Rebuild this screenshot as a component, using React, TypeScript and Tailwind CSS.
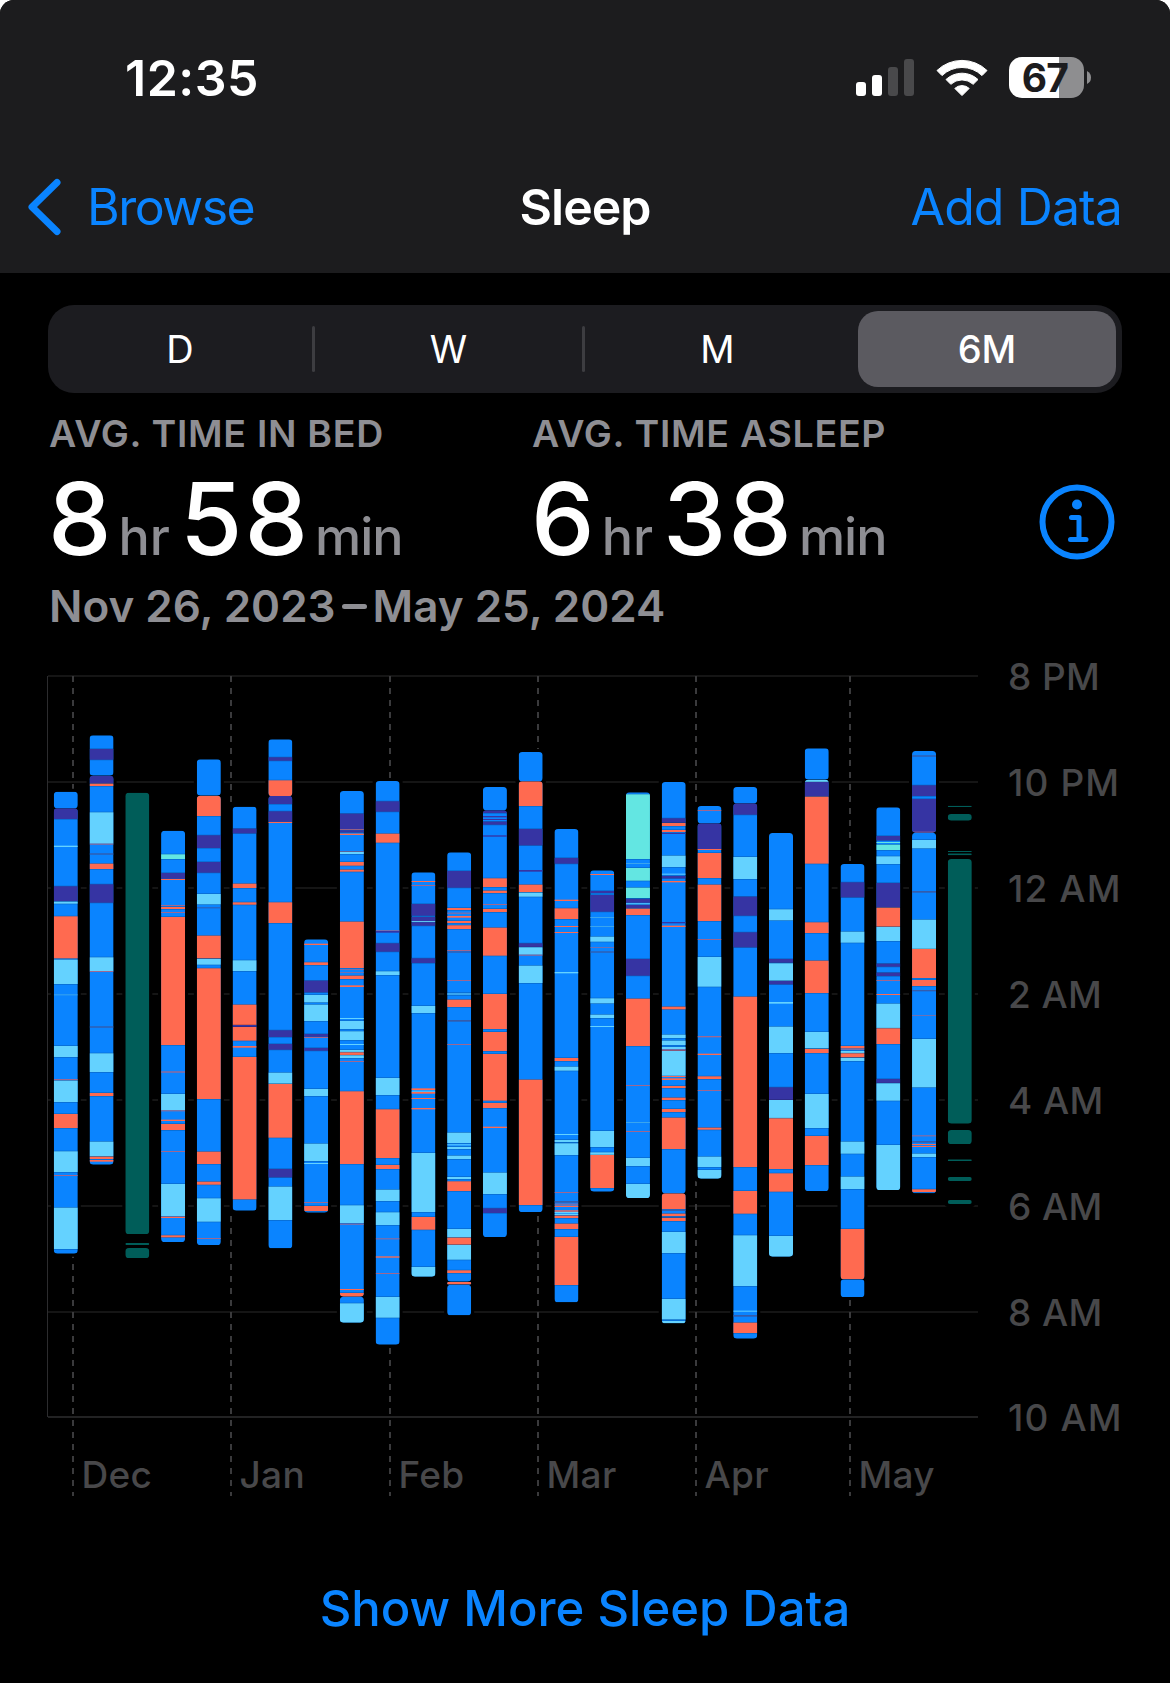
import React from 'react';

type Seg = [kind: string, from: number, to: number];
type Bar = { kind?: 'asleep'; blocks: [number, number][]; segs: Seg[] };

// R awake, P deep, C REM, M unspecified; lowercase kinds are short, blended samples.
const COLORS: Record<string, string> = {
  R: '#ff6a50',
  P: '#3634a3',
  C: '#64d2ff',
  M: '#63e6e2',
  r: '#a0678f',
  p: '#2a56a8',
  d: '#345cab',
  c: '#3aa5ee',
};

const parse = (s: string): Seg[] =>
  s
    .split(' ')
    .filter(Boolean)
    .map((t) => {
      const [a, b] = t.slice(1).split('-').map(Number);
      return [t[0], a, b];
    });

const bar = (blocks: [number, number][], segs: string): Bar => ({ blocks, segs: parse(segs) });
const asleep = (blocks: [number, number][]): Bar => ({ kind: 'asleep', blocks, segs: [] });

// One entry per week; values are thirds of a pixel below y = 660.
const BARS: Bar[] = [
  bar([[395, 445], [445, 1781]], 'P445-477 C557-561 P679-723 C725-731 R769-895 C899-972 c1003-1006 C1158-1191 r1257-1261 C1262-1326 R1362-1404 C1474-1536 r1545-1548 C1643-1767'),
  bar([[226, 347], [347, 1514]], 'P267-299 P347-370 R371-378 C457-551 r551-554 d580-584 R611-627 P673-728 C892-933 r933-936 d1099-1103 C1180-1236 R1299-1308 C1445-1489 R1490-1497 R1500-1505'),
  asleep([[398, 1722], [1749, 1755], [1764, 1794]]),
  bar([[512, 1746]], 'M583-597 P639-656 R657-660 r735-738 R741-747 r756-759 R771-1155 r1234-1238 C1302-1351 r1351-1354 R1379-1383 R1392-1410 r1473-1476 C1572-1668 R1670-1674 R1726-1732'),
  bar([[298, 407], [407, 1755]], 'R407-468 P526-564 P606-638 C702-733 d742-745 R827-895 C897-914 R925-1317 R1475-1512 R1565-1574 C1615-1685 r1734-1737'),
  bar([[440, 1652]], 'P506-520 R671-684 R727-734 C901-933 R1034-1095 P1095-1101 R1101-1142 R1158-1163 R1191-1618'),
  bar([[238, 408], [408, 1765]], 'P292-302 R361-408 P408-432 P454-485 R486-489 R727-789 P1111-1131 P1152-1169 C1238-1271 R1272-1433 P1527-1552 C1580-1680'),
  bar([[838, 1658]], 'R851-855 R907-915 P962-997 C1005-1027 C1034-1083 P1122-1130 r1131-1134 P1164-1172 C1287-1308 C1451-1503 C1509-1512 r1626-1629 R1638-1653'),
  bar([[393, 1910], [1910, 1988]], 'P461-507 r507-510 P511-517 R521-525 r573-575 C576-582 R606-617 R629-635 R785-924 r928-930 r936-938 R947-957 R976-981 C1074-1077 C1083-1107 C1114-1140 C1152-1155 C1170-1176 R1177-1185 C1186-1194 r1203-1206 R1294-1512 C1636-1689 r1691-1694 R1887-1890 R1899-1910 C1930-1988'),
  bar([[363, 2054]], 'P424-455 R521-548 r810-812 P813-818 P850-875 C934-945 C1254-1305 R1348-1494 R1515-1527 C1589-1623 C1657-1695 r1735-1738 R1789-1793 r1839-1842 C1911-1973'),
  bar([[637, 1850]], 'R663-666 r675-678 P732-767 P771-783 C783-786 P787-797 P895-909 C1038-1059 R1285-1290 C1292-1295 R1296-1301 R1314-1317 R1344-1348 C1479-1656 R1671-1709 C1821-1850'),
  bar([[577, 1865], [1865, 1874], [1874, 1966]], 'P633-683 R744-750 r758-761 R768-773 R783-789 R796-807 r870-873 d874-878 r960-963 c999-1005 R1019-1041 d1080-1085 r1152-1155 C1418-1449 C1453-1456 C1461-1467 C1487-1497 C1551-1557 R1564-1593 C1707-1732 R1733-1754 C1755-1799 R1831-1839 R1866-1873'),
  bar([[381, 451], [451, 1731]], 'P451-459 P468-472 P477-480 P485-494 P526-530 R655-681 R692-699 r732-735 R747-756 R803-887 R1002-1107 R1116-1173 R1182-1322 R1329-1344 R1400-1404 C1538-1602 P1645-1659'),
  bar([[276, 364], [364, 1656]], 'R364-438 P507-556 P630-635 R674-696 C698-710 P850-861 C862-884 r884-887 C917-969 R1259-1635'),
  bar([[507, 1927]], 'P594-611 R719-723 R745-777 R798-801 R816-819 C936-940 R1194-1203 C1220-1232 C1422-1425 C1440-1446 C1450-1485 r1596-1599 d1623-1628 r1631-1634 R1637-1641 R1651-1655 C1656-1660 C1662-1665 R1667-1674 R1691-1707 R1731-1875'),
  bar([[631, 1595]], 'R642-645 P693-699 P705-755 c771-774 c798-801 C830-845 r861-863 d874-878 C1015-1030 C1064-1074 C1098-1101 C1413-1461 C1477-1485 R1485-1584'),
  bar([[397, 1614]], 'M403-597 c609-612 M624-662 M683-714 P717-728 C730-733 P735-744 R746-765 P897-947 R1016-1158 r1275-1278 c1386-1389 r1413-1416 C1494-1518 C1572-1614'),
  bar([[366, 1600], [1600, 1990]], 'P475-488 R489-498 R510-516 P519-522 C587-621 C641-644 P648-655 R663-667 P786-790 R797-801 R1040-1048 C1124-1134 C1142-1155 C1161-1167 r1168-1173 C1173-1247 R1248-1251 R1255-1260 R1278-1284 R1313-1320 R1347-1356 R1373-1467 R1600-1647 d1648-1653 R1661-1668 d1669-1673 R1674-1683 C1716-1779 C1917-1978 C1983-1990'),
  bar([[438, 490], [490, 1556]], 'r450-453 P490-567 R567-570 R579-654 R674-783 r837-840 C891-980 r1128-1132 R1181-1185 R1249-1257 r1290-1293 R1403-1409 C1490-1521 C1530-1556'),
  bar([[381, 430], [430, 2036]], 'P430-464 C591-657 P710-767 P817-862 R1010-1521 R1593-1661 C1726-1878 C1952-1955 d1965-1970 R1988-2019'),
  bar([[519, 1790]], 'C748-781 P897-908 C910-962 P963-973 C1026-1031 C1100-1179 P1282-1320 C1320-1374 R1375-1527 R1540-1595 C1728-1790'),
  bar([[265, 359], [359, 1593]], 'C359-366 P366-409 R410-611 R787-819 R902-999 C1116-1165 R1167-1179 C1302-1404 R1428-1515'),
  bar([[612, 1858], [1858, 1911]], 'P667-712 C815-848 R1158-1165 r1166-1169 C1173-1179 R1180-1192 C1194-1203 C1445-1481 C1550-1587 R1707-1858'),
  bar([[442, 1590]], 'P528-541 M546-549 M554-570 C589-612 P669-742 R743-800 C801-843 P911-920 P938-948 r960-963 R1002-1005 C1031-1104 R1105-1152 P1257-1269 C1270-1322 C1455-1590'),
  bar([[273, 518], [518, 1600]], 'd286-290 P376-408 P417-518 r515-518 C540-565 d693-698 C779-867 R867-954 R960-978 d990-994 r1066-1068 C1137-1282 r1426-1429 d1443-1448 R1452-1455 R1458-1461 C1481-1491 R1588-1596'),
  asleep([[437, 441], [462, 482], [573, 576], [580, 586], [597, 1391], [1410, 1452], [1498, 1503], [1551, 1563], [1620, 1632]]),
];

const FIRST_X = 53.8;
const PITCH = 35.76;
const BAR_W = 24;
const toY = (u: number) => 660 + u / 3;

const HOURS = [
  { y: 676, label: '8 PM' },
  { y: 782, label: '10 PM' },
  { y: 888, label: '12 AM' },
  { y: 994, label: '2 AM' },
  { y: 1100, label: '4 AM' },
  { y: 1206, label: '6 AM' },
  { y: 1312, label: '8 AM' },
  { y: 1417, label: '10 AM' },
];

const MONTHS = [
  { x: 73, label: 'Dec' },
  { x: 231, label: 'Jan' },
  { x: 390, label: 'Feb' },
  { x: 538, label: 'Mar' },
  { x: 696, label: 'Apr' },
  { x: 850, label: 'May' },
];

function WeekBar({ data, index }: { data: Bar; index: number }) {
  const x = FIRST_X + index * PITCH;
  const fill = data.kind === 'asleep' ? '#005d59' : '#0a84ff';
  return (
    <g>
      {data.blocks.map(([a, b], i) => (
        <rect key={i} x={x - 3} y={toY(a) - 3} width={BAR_W + 6} height={(b - a) / 3 + 6} rx={3} fill="#000" />
      ))}
      {data.blocks.map(([a, b], i) => {
        const id = `week-${index}-${i}`;
        const h = (b - a) / 3;
        return (
          <g key={i}>
            <clipPath id={id}>
              <rect x={x} y={toY(a)} width={BAR_W} height={h} rx={Math.min(3.6, h / 2)} />
            </clipPath>
            <g clipPath={`url(#${id})`}>
              <rect x={x} y={toY(a)} width={BAR_W} height={h} fill={fill} />
              {data.segs
                .filter(([, s, e]) => e > a && s < b)
                .map(([k, s, e], j) => (
                  <g key={j}>
                    {e - s > 5 && (
                      <rect x={x} y={toY(s) - 0.6} width={BAR_W} height={(e - s) / 3 + 1.2} fill="#000" opacity={0.25} />
                    )}
                    <rect x={x} y={toY(s)} width={BAR_W} height={(e - s) / 3} fill={COLORS[k]} />
                  </g>
                ))}
            </g>
          </g>
        );
      })}
    </g>
  );
}

function SleepChart() {
  return (
    <svg viewBox="0 650 1170 860" width={1170} height={860} className="block font-['Inter',sans-serif]">
      {HOURS.map((h) => (
        <rect key={h.label} x={48} y={h.y - 1} width={930} height={2} fill={h.y === 1417 ? '#222223' : '#151515'} />
      ))}
      <rect x={47} y={676} width={1} height={741} fill="#2c2c2e" />
      {MONTHS.map((m) => (
        <line key={m.x} x1={m.x} x2={m.x} y1={676} y2={1496} stroke="#3a3a3c" strokeWidth={2} strokeDasharray="6 6" />
      ))}
      {BARS.map((b, i) => (
        <WeekBar key={i} data={b} index={i} />
      ))}
      {HOURS.map((h) => (
        <text
          key={h.label}
          x={1008}
          y={h.y + 13.5}
          fontSize={37}
          letterSpacing={h.label.length > 4 ? 1.1 : 0.4}
          fontWeight={450}
          fill="#48484a"
        >
          {h.label}
        </text>
      ))}
      {MONTHS.map((m) => (
        <text key={m.x} x={m.x + 8.5} y={1488} fontSize={37} letterSpacing={0.3} fontWeight={450} fill="#48484a">
          {m.label}
        </text>
      ))}
    </svg>
  );
}

function Signal() {
  return (
    <svg width={58} height={37} viewBox="856 59 58 37">
      <rect x={856} y={82} width={10} height={14} rx={3} fill="#fff" />
      <rect x={872} y={75} width={10} height={21} rx={3} fill="#fff" />
      <rect x={888} y={67} width={10} height={29} rx={3} fill="#49494b" />
      <rect x={904} y={59} width={10} height={37} rx={3} fill="#49494b" />
    </svg>
  );
}

function Wifi() {
  return (
    <svg width={52} height={38} viewBox="-26 -37 52 38" fill="#fff" stroke="#fff" strokeWidth={1} strokeLinejoin="round">
      <path d="M-25-25.5A36 36 0 0 1 25-25.5L20-20.4A28.7 28.7 0 0 0-20-20.4Z" />
      <path d="M-16-16.5A23.4 23.4 0 0 1 16-16.5L11.2-11.7A16.5 16.5 0 0 0-11.2-11.7Z" />
      <path d="M-7.2-7.6A10.6 10.6 0 0 1 7.2-7.6L0-.4Z" />
    </svg>
  );
}

function Battery() {
  return (
    <div className="flex items-center">
      <div className="flex h-[41px] w-[75px] items-center justify-center rounded-[13px] bg-[linear-gradient(90deg,#fff_50px,#8e8e90_50px)] pr-[3px] text-[39px] leading-none font-bold tracking-[-0.8px] text-[#1c1c1e]">
        67
      </div>
      <svg className="ml-[3px]" width={4} height={13} viewBox="0 0 4 13">
        <path d="M0 0Q4 2 4 6.5T0 13Z" fill="#8e8e90" />
      </svg>
    </div>
  );
}

function InfoIcon() {
  return (
    <svg width={76} height={76} viewBox="-38 -38 76 76" fill="none" stroke="#0a84ff">
      <circle r={34.5} strokeWidth={6} />
      <circle cx={0} cy={-17.5} r={5} fill="#0a84ff" stroke="none" />
      <path d="M-5.5-4.5H2V17M-6.5 17.5H9" strokeWidth={5} strokeLinecap="round" strokeLinejoin="round" />
    </svg>
  );
}

function Stat({ title, hours, minutes, className }: { title: string; hours: string; minutes: string; className: string }) {
  return (
    <div className={className}>
      <div className="h-[44px] text-[37.5px] leading-[46px] font-semibold tracking-[0.7px] whitespace-nowrap text-[#8e8e93]">{title}</div>
      <div className="mt-[13px] -ml-px flex h-[100px] items-baseline leading-[100px] whitespace-nowrap text-[#8e8e93]">
        <span className="text-[101px] font-medium tracking-[2px] text-white">{hours}</span>
        <span className="ml-[5px] text-[52px] font-medium">hr</span>
        <span className="ml-[10px] text-[101px] font-medium tracking-[2px] text-white">{minutes}</span>
        <span className="ml-[5px] text-[52px] font-medium tracking-[-1px]">min</span>
      </div>
    </div>
  );
}

export default function App() {
  return (
    <div className="h-[1683px] w-[1170px] overflow-hidden bg-white font-['Inter',sans-serif]">
      <div className="flex h-full flex-col rounded-t-[14px] bg-black">
        <header className="h-[273px] shrink-0 rounded-t-[14px] bg-[#1c1c1e]">
          <div className="flex h-[156px] items-center justify-between pr-[79px] pl-[125px]">
            <span className="text-[50px] leading-none font-semibold tracking-[0.5px] text-white">12:35</span>
            <div className="-mt-px flex items-center">
              <Signal />
              <div className="ml-[22px]">
                <Wifi />
              </div>
              <div className="ml-[21px]">
                <Battery />
              </div>
            </div>
          </div>
          <nav className="grid h-[102px] grid-cols-3 items-center text-[50px] leading-none whitespace-nowrap text-[#0a84ff]">
            <div className="flex items-center pl-[27px]">
              <svg width={34} height={58} viewBox="0 0 34 58" fill="none" stroke="#0a84ff" strokeWidth={7} strokeLinecap="round" strokeLinejoin="round">
                <path d="M30 4.500L5 29L30 53.500" />
              </svg>
              <span className="ml-[26px] tracking-[-1.5px]">Browse</span>
            </div>
            <div className="text-center font-semibold tracking-[-1px] text-white">Sleep</div>
            <div className="pr-[48px] text-right tracking-[-0.9px]">Add Data</div>
          </nav>
        </header>

        <div className="mx-[48px] mt-[32px] flex h-[88px] shrink-0 items-center rounded-[26px] bg-[#1c1c20] pr-[6px] text-[38px] text-white">
          <div className="w-[264px] text-center">D</div>
          <div className="h-[46px] w-[3px] rounded bg-[#3d3d41]" />
          <div className="w-[267px] text-center">W</div>
          <div className="h-[46px] w-[3px] rounded bg-[#3d3d41]" />
          <div className="w-[265px] text-center">M</div>
          <div className="ml-auto flex h-[76px] w-[258px] items-center justify-center rounded-[20px] bg-[#5b5a60] font-medium">6M</div>
        </div>

        <div className="mt-[18px] flex h-[144px] shrink-0 items-start pr-[55px] pl-[49px]">
          <Stat className="w-[483px]" title="AVG. TIME IN BED" hours="8" minutes="58" />
          <Stat className="flex-1" title="AVG. TIME ASLEEP" hours="6" minutes="38" />
          <div className="mt-[73px]">
            <InfoIcon />
          </div>
        </div>
        <div className="mt-[25px] flex h-[52px] shrink-0 items-center gap-[6px] pl-[49px] text-[44px] font-semibold whitespace-nowrap text-[#8e8e93]">
          <span>Nov 26, 2023</span>
          <span className="h-[5px] w-[25px] rounded-full bg-[#8e8e93]" />
          <span>May 25, 2024</span>
        </div>

        <div className="mt-[18px] shrink-0">
          <SleepChart />
        </div>
        <div className="mt-[69px] text-center text-[49px] leading-[60px] font-medium whitespace-nowrap text-[#0a84ff]">Show More Sleep Data</div>
      </div>
    </div>
  );
}
